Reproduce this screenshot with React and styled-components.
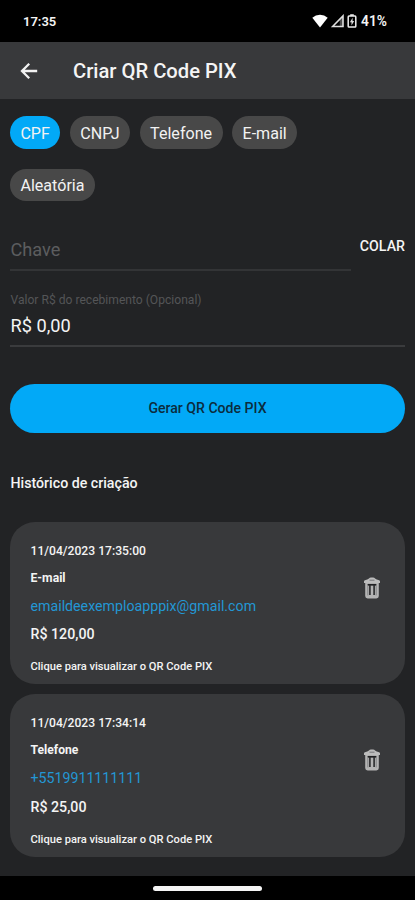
import React, { useState } from "react";
import styled, { createGlobalStyle } from "styled-components";

const keyTypes = ["CPF", "CNPJ", "Telefone", "E-mail", "Aleatória"];

const initialHistory = [
  {
    id: 1,
    date: "11/04/2023 17:35:00",
    type: "E-mail",
    pixKey: "emaildeexemploapppix@gmail.com",
    value: "R$ 120,00",
  },
  {
    id: 2,
    date: "11/04/2023 17:34:14",
    type: "Telefone",
    pixKey: "+5519911111111",
    value: "R$ 25,00",
  },
];

const TrashIcon = () => (
  <svg width="18" height="24" viewBox="0 0 18 24">
    <path d="M1 7V5.2Q1 4 2.6 3.9 4.4 3.8 5.6 2.8 6.8 1.5 8 1.5h2Q11.2 1.5 12.4 2.8q1.2 1 3 1.1Q17 4 17 5.2V7Z" fill="#bcbcbc" />
    <path d="M2.2 7h13.6v13q0 2.4-2.4 2.4H4.6q-2.4 0-2.4-2.4Z" fill="#b4b4b4" />
    <path d="M6.5 4.2h5" stroke="#77787a" strokeWidth="1" />
    <path d="M4.6 8.8h8.8" stroke="#1f2022" strokeWidth="1.7" />
    <path d="M6.9 9v10M11.1 9v10" stroke="#2a2b2d" strokeWidth="1.6" />
    <path d="M4.8 10v9.4M13.2 10v9.4" stroke="#77787a" strokeWidth="0.8" />
  </svg>
);

const App = () => {
  const [selected, setSelected] = useState("CPF");
  const [pixKey, setPixKey] = useState("");
  const [history, setHistory] = useState(initialHistory);

  return (
    <Screen>
      <GlobalStyle />
      <StatusBar>
        <Clock>17:35</Clock>
        <StatusIcons>
          <svg width="16" height="14" viewBox="0 0 16 14" fill="#fff">
            <path d="M8 13.4 0.3 3.8Q3.6 0.8 8 0.8t7.7 3Z" />
          </svg>
          <svg width="13" height="14" viewBox="0 0 13 14">
            <path d="M1.6 12.5 12 1.9v10.6Z" fill="none" stroke="#ddd" strokeWidth="1.6" />
            <path d="M8.8 5.3 12 2v10.5H8.8Z" fill="#ddd" fillOpacity="0.35" />
          </svg>
          <svg width="10" height="14" viewBox="0 0 10 14">
            <path d="M3.2 0.3h3.6v1.5H3.2z" fill="#fff" />
            <rect x="1.2" y="2.1" width="7.6" height="11" rx="0.8" fill="none" stroke="#eee" strokeWidth="1.5" />
            <path d="M5.6 3.8 2.9 8.2h1.6v3.3l2.7-4.6H5.6Z" fill="#ddd" />
          </svg>
          <Battery>41%</Battery>
        </StatusIcons>
      </StatusBar>
      <Header>
        <BackButton aria-label="Voltar">
          <svg width="18" height="18" viewBox="0 0 18 18" fill="none" stroke="#f2f2f2" strokeWidth="2.3">
            <path d="M17.2 9H2.6M9.2 1.8 2 9 9.2 16.2" />
          </svg>
        </BackButton>
        <Title>Criar QR Code PIX</Title>
      </Header>
      <Main>
        <Chips>
          {keyTypes.map((type) => (
            <Chip key={type} $active={type === selected} onClick={() => setSelected(type)}>
              {type}
            </Chip>
          ))}
        </Chips>
        <KeyRow>
          <KeyInput placeholder="Chave" value={pixKey} onChange={(e) => setPixKey(e.target.value)} />
          <PasteButton>COLAR</PasteButton>
        </KeyRow>
        <ValueField>
          <Label>Valor R$ do recebimento (Opcional)</Label>
          <ValueInput defaultValue="R$ 0,00" />
        </ValueField>
        <GenerateButton>Gerar QR Code PIX</GenerateButton>
        <Subtitle>Histórico de criação</Subtitle>
        <List>
          {history.map((item) => (
            <Card key={item.id}>
              <Info>
                <DateText>{item.date}</DateText>
                <Type>{item.type}</Type>
                <Key>{item.pixKey}</Key>
                <Value>{item.value}</Value>
                <Hint>Clique para visualizar o QR Code PIX</Hint>
              </Info>
              <DeleteButton
                aria-label="Excluir"
                onClick={() => setHistory(history.filter((h) => h.id !== item.id))}
              >
                <TrashIcon />
              </DeleteButton>
            </Card>
          ))}
        </List>
      </Main>
      <NavBar>
        <Handle />
      </NavBar>
    </Screen>
  );
};

const GlobalStyle = createGlobalStyle`
  * {
    box-sizing: border-box;
  }
  body {
    margin: 0;
    background: #222325;
    font-family: Roboto, "Liberation Sans", sans-serif;
  }
  button, input {
    margin: 0;
    padding: 0;
    border: none;
    outline: none;
    background: none;
    font-family: inherit;
  }
`;
const Screen = styled.div`
  display: flex;
  flex-direction: column;
  height: 900px;
  overflow: hidden;
  background: #222325;
  color: #f4f4f4;
`;
const StatusBar = styled.div`
  display: flex;
  justify-content: space-between;
  align-items: center;
  height: 42px;
  padding: 0 28px 0 23px;
  background: #000;
`;
const Clock = styled.span`
  font-size: 13px;
  font-weight: 600;
`;
const StatusIcons = styled.div`
  display: flex;
  align-items: center;
  gap: 3px;
`;
const Battery = styled.span`
  margin-left: 1px;
  font-size: 13.8px;
  font-weight: 600;
`;
const Header = styled.header`
  display: flex;
  align-items: center;
  height: 57px;
  padding-left: 20px;
  background: #38393b;
`;
const BackButton = styled.button`
  display: flex;
`;
const Title = styled.h1`
  margin: 0 0 0 35px;
  font-size: 20.2px;
  font-weight: 500;
`;
const Main = styled.main`
  flex: 1;
  padding: 17px 10px 0;
`;
const Chips = styled.div`
  display: flex;
  flex-wrap: wrap;
  gap: 20px 9.6px;
  padding-right: 20px;
`;
const Chip = styled.button`
  height: 32.5px;
  padding: 2px 10.4px 0;
  border-radius: 17px;
  background: ${({ $active }) => ($active ? "#02a9f7" : "#484848")};
  color: #f2f2f2;
  font-size: 16.1px;
`;
const KeyRow = styled.div`
  display: flex;
  gap: 9px;
  margin-top: 28px;
`;
const KeyInput = styled.input`
  flex: 1;
  min-width: 0;
  height: 42px;
  padding-left: 0.5px;
  border-bottom: 2px solid #333436;
  color: #f4f4f4;
  font-size: 18.2px;
  &::placeholder {
    color: #5c5d5f;
  }
`;
const PasteButton = styled.button`
  height: 33px;
  color: #f4f4f4;
  font-size: 14.2px;
  font-weight: 500;
`;
const ValueField = styled.label`
  display: flex;
  flex-direction: column;
  margin-top: 22px;
`;
const Label = styled.span`
  padding-left: 0.5px;
  color: #545557;
  font-size: 12.1px;
  line-height: 14px;
`;
const ValueInput = styled.input`
  height: 40px;
  padding: 0 0 1px 0.5px;
  border-bottom: 2px solid #3a3b3d;
  color: #f4f4f4;
  font-size: 18.2px;
`;
const GenerateButton = styled.button`
  width: 100%;
  height: 49px;
  margin-top: 36.5px;
  border-radius: 25px;
  background: #02a9f7;
  color: #0b2c3e;
  font-size: 14.1px;
  font-weight: 500;
`;
const Subtitle = styled.h2`
  margin: 42px 0 31px;
  padding-left: 0.5px;
  font-size: 14.2px;
  font-weight: 500;
  line-height: 16px;
`;
const List = styled.div`
  display: flex;
  flex-direction: column;
  gap: 10px;
`;
const Card = styled.div`
  display: flex;
  justify-content: space-between;
  height: 162.5px;
  padding: 20px 24px 0 20.5px;
  border-radius: 25px;
  background: #38393b;
`;
const Info = styled.div`
  display: flex;
  flex-direction: column;
`;
const DateText = styled.span`
  font-size: 12.15px;
  font-weight: 500;
  line-height: 19.5px;
`;
const Type = styled.span`
  margin-top: 6.5px;
  font-size: 12.15px;
  font-weight: 700;
  line-height: 20px;
`;
const Key = styled.span`
  margin-top: 8px;
  color: #2397d4;
  font-size: 14.2px;
  line-height: 20px;
`;
const Value = styled.span`
  margin-top: 8.5px;
  font-size: 14.2px;
  font-weight: 500;
  line-height: 20px;
`;
const Hint = styled.span`
  margin-top: 13px;
  font-size: 11.15px;
  font-weight: 500;
  line-height: 20px;
`;
const DeleteButton = styled.button`
  display: flex;
  align-self: flex-start;
  margin-top: 34px;
`;
const NavBar = styled.div`
  display: flex;
  justify-content: center;
  align-items: center;
  height: 24px;
  background: #000;
`;
const Handle = styled.div`
  width: 109px;
  height: 5px;
  border-radius: 3px;
  background: #f5f5f5;
`;

export default App;
